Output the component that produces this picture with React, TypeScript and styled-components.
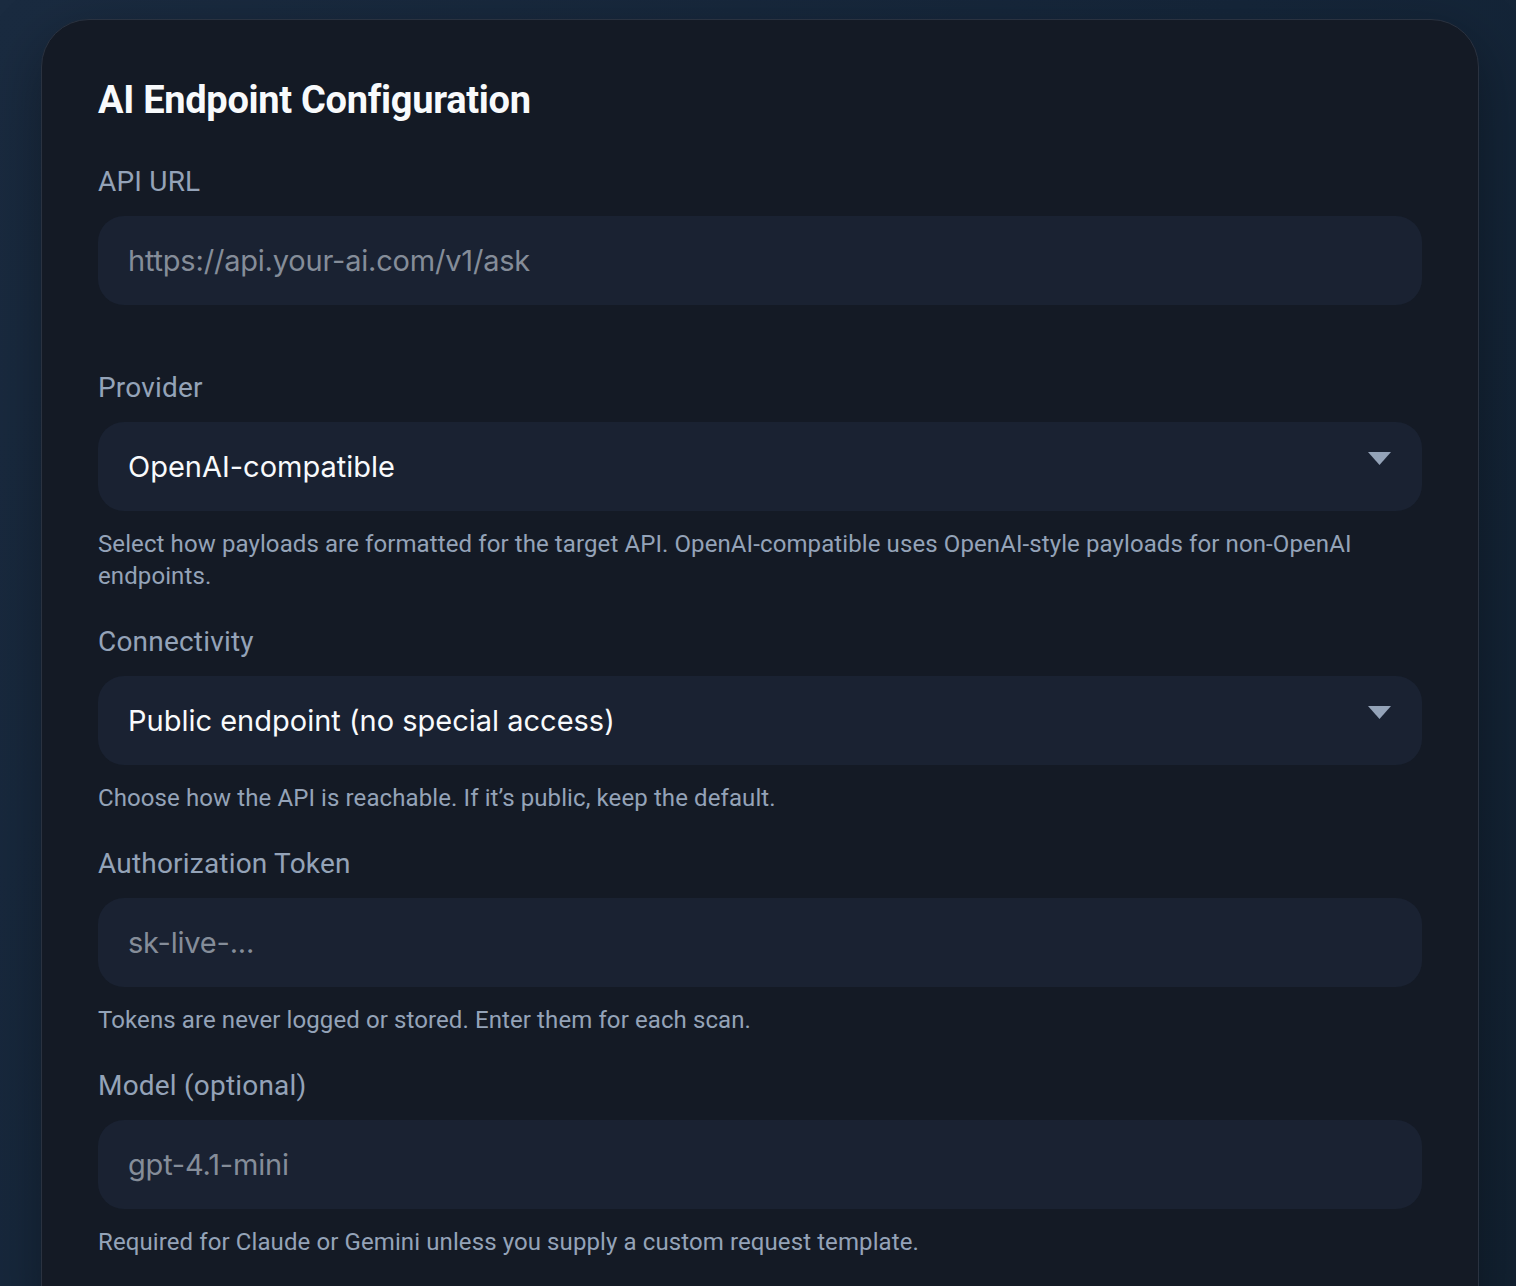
import styled, { createGlobalStyle } from 'styled-components'

const GlobalStyle = createGlobalStyle`
  html, body {
    margin: 0;
    padding: 0;
    height: 100%;
    overflow: hidden;
  }
  body {
    background: linear-gradient(120deg, #1a2b40 0%, #15263a 55%, #122131 100%);
    font-family: 'Roboto', 'Noto Sans', sans-serif;
  }
`

interface FieldProps {
  label: string
  hint?: string
  spaced?: boolean
  children: React.ReactNode
}

function Field({ label, hint, spaced, children }: FieldProps) {
  return (
    <FieldWrap $spaced={spaced}>
      <Label>{label}</Label>
      {children}
      {hint && <Hint>{hint}</Hint>}
    </FieldWrap>
  )
}

function Caret() {
  return (
    <CaretIcon width="23" height="13" viewBox="0 0 23 13">
      <path d="M0 0 H23 L11.5 13 Z" fill="#94a3b8" />
    </CaretIcon>
  )
}

export default function App() {
  return (
    <>
      <GlobalStyle />
      <Page>
        <Card>
          <Title>AI Endpoint Configuration</Title>
          <Form>
            <Field label="API URL" spaced>
              <TextInput placeholder="https://api.your-ai.com/v1/ask" />
            </Field>
            <Field
              label="Provider"
              hint="Select how payloads are formatted for the target API. OpenAI-compatible uses OpenAI-style payloads for non-OpenAI endpoints."
            >
              <Select>
                <span>OpenAI-compatible</span>
                <Caret />
              </Select>
            </Field>
            <Field
              label="Connectivity"
              hint="Choose how the API is reachable. If it’s public, keep the default."
            >
              <Select>
                <span>Public endpoint (no special access)</span>
                <Caret />
              </Select>
            </Field>
            <Field
              label="Authorization Token"
              hint="Tokens are never logged or stored. Enter them for each scan."
            >
              <TextInput placeholder="sk-live-..." />
            </Field>
            <Field
              label="Model (optional)"
              hint="Required for Claude or Gemini unless you supply a custom request template."
            >
              <TextInput placeholder="gpt-4.1-mini" />
            </Field>
          </Form>
        </Card>
      </Page>
    </>
  )
}

const Page = styled.main`
  padding: 19px 37px 0 41px;
`

const Card = styled.section`
  background: #141a25;
  border: 1.5px solid #2a3240;
  border-radius: 48px;
  padding: 60px 56px 80px 56px;
  box-shadow: 0 20px 60px rgba(0, 0, 0, 0.35);
`

const Title = styled.h1`
  margin: 0 0 44px;
  font-size: 38px;
  line-height: 41px;
  font-weight: 700;
  color: #f8fafc;
  letter-spacing: -0.3px;
`

const Form = styled.div`
  display: flex;
  flex-direction: column;
  gap: 33px;
`

const FieldWrap = styled.div<{ $spaced?: boolean }>`
  display: flex;
  flex-direction: column;
  margin-bottom: ${(p) => (p.$spaced ? '33px' : '0')};
`

const Label = styled.label`
  font-size: 28px;
  line-height: 34px;
  letter-spacing: 0.2px;
  color: #94a3b8;
  margin-bottom: 17px;
`

const controlBase = `
  box-sizing: border-box;
  width: 100%;
  height: 89px;
  border: none;
  border-radius: 26px;
  background: #1a2232;
  padding: 0 30px;
  font-family: 'Inter', 'Liberation Sans', sans-serif;
  font-size: 29px;
  outline: none;
`

const TextInput = styled.input`
  ${controlBase}
  color: #f1f5f9;
  &::placeholder {
    color: #858d99;
    letter-spacing: -0.2px;
  }
`

const Select = styled.div`
  ${controlBase}
  display: flex;
  align-items: center;
  justify-content: space-between;
  padding-right: 31px;
  color: #f8fafc;
  cursor: pointer;
`

const CaretIcon = styled.svg`
  align-self: flex-start;
  margin-top: 30px;
  flex-shrink: 0;
`

const Hint = styled.p`
  margin: 17px 0 0;
  font-size: 24px;
  line-height: 32px;
  letter-spacing: 0.1px;
  color: #94a3b8;
`
